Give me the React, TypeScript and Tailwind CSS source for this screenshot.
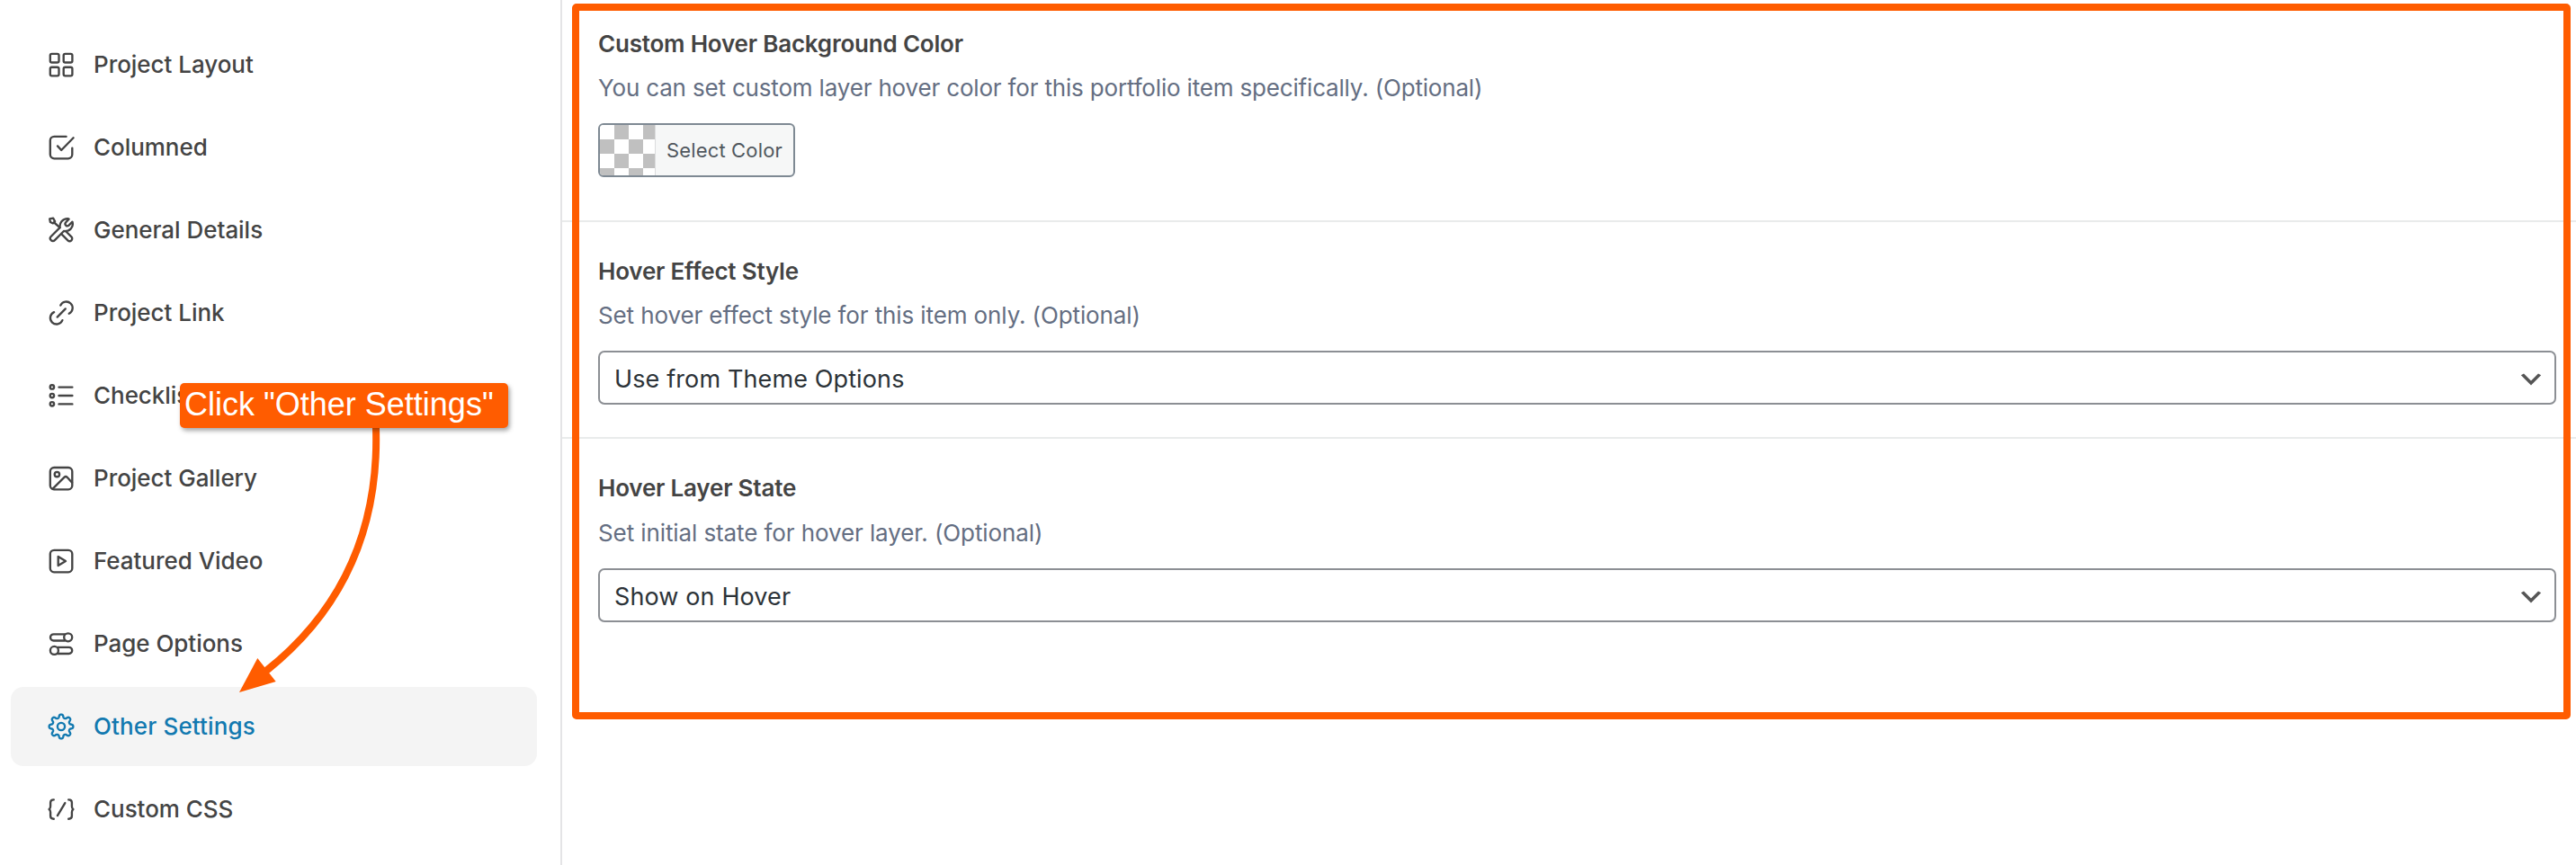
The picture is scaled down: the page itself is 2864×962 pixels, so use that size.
import type { ReactNode } from "react";

const gearPath = (() => {
  const pts: string[] = [];
  for (let i = 0; i < 320; i++) {
    const a = (i / 320) * Math.PI * 2;
    const r = 11.6 + (1.75 * Math.tanh(1.7 * Math.cos(8 * a))) / Math.tanh(1.7);
    pts.push(`${(16 + r * Math.sin(a)).toFixed(2)} ${(16 - r * Math.cos(a)).toFixed(2)}`);
  }
  return `M${pts.join("L")}Z`;
})();

const icons: Record<string, ReactNode> = {
  layout: (
    <>
      <rect x="3.8" y="3.8" width="9.7" height="9.7" rx="1.8" />
      <rect x="18.7" y="3.8" width="9.7" height="9.7" rx="1.8" />
      <rect x="3.8" y="18.7" width="9.7" height="9.7" rx="1.8" />
      <rect x="18.7" y="18.7" width="9.7" height="9.7" rx="1.8" />
    </>
  ),
  check: (
    <>
      <path d="M21.6 3.8H8.3a4.5 4.5 0 0 0-4.5 4.5v15.5a4.5 4.5 0 0 0 4.5 4.5h15.5a4.5 4.5 0 0 0 4.5-4.5v-7.2" />
      <path d="M12 14.4l4.2 4.6L29.6 5.3" />
    </>
  ),
  tools: (
    <>
      <path d="M3.2 3.4l4-.7 1.9 3.7-2.2 1.9L3.9 7z" />
      <path d="M8.2 7.5l6.4 5.6" />
      <path d="M14.6 13.1c-.7-5.6 2.8-9.6 8.7-9.9l1.3.5-3.4 3.6c-1 1.1-.9 2.4 0 3.3s2.2 1 3.3 0l4-3.9c1.6 5.6-2.6 11-9.6 10.3L8.9 27.1a2.9 2.9 0 0 1-4.2-4.1z" />
      <path d="M16.2 20.2l7.2 7.1a2.8 2.8 0 0 0 4-4l-6.4-6.3" />
    </>
  ),
  link: (
    <>
      <path d="M11.7 20.6l9.1-9.2" />
      <path d="M15.3 7.6a7 7 0 1 1 9.4 9.2" />
      <path d="M8.1 15.1a7 7 0 1 0 9.3 9" />
    </>
  ),
  list: (
    <>
      <circle cx="5.9" cy="6.4" r="2.2" />
      <circle cx="5.9" cy="16" r="2.2" />
      <circle cx="5.9" cy="25.3" r="2.2" />
      <path d="M13.5 6.6h14.9M13.5 16h14.9M13.5 25.4h14.9" />
    </>
  ),
  image: (
    <>
      <rect x="3.8" y="4" width="24.5" height="24.3" rx="4.3" />
      <circle cx="11.4" cy="11.5" r="2.7" />
      <path d="M6.6 27.6L19.4 14.8q1.7-1.6 3.3 0l5.4 5.9" />
    </>
  ),
  video: (
    <>
      <rect x="3.8" y="3.8" width="24.5" height="24.5" rx="4.3" />
      <path d="M12.7 10.9v10.2L21 16z" />
    </>
  ),
  toggles: (
    <>
      <path d="M19.9 5.3H7.6a3.6 3.6 0 0 0 0 7.2h12.3" />
      <circle cx="23.7" cy="8.8" r="4.5" />
      <circle cx="8.4" cy="23.4" r="4.5" />
      <path d="M12.2 19.8h12.4a3.6 3.6 0 0 1 0 7.2H12.2" />
    </>
  ),
  gear: (
    <>
      <path d={gearPath} />
      <circle cx="16" cy="16" r="4.1" />
    </>
  ),
  code: (
    <>
      <path d="M7.8 5.3c-2.6 0-3.7.9-3.7 3.2v4.2c0 1.6-.4 2.6-1.5 3.3 1.1.7 1.5 1.7 1.5 3.3v4.2c0 2.3 1.1 3.2 3.7 3.2" />
      <path d="M24.2 5.3c2.6 0 3.7.9 3.7 3.2v4.2c0 1.6.4 2.6 1.5 3.3-1.1.7-1.5 1.7-1.5 3.3v4.2c0 2.3-1.1 3.2-3.7 3.2" />
      <path d="M20.3 9.1l-8.4 14" />
    </>
  ),
};

const nav = [
  { label: "Project Layout", icon: "layout" },
  { label: "Columned", icon: "check" },
  { label: "General Details", icon: "tools" },
  { label: "Project Link", icon: "link" },
  { label: "Checklist", icon: "list" },
  { label: "Project Gallery", icon: "image" },
  { label: "Featured Video", icon: "video" },
  { label: "Page Options", icon: "toggles" },
  { label: "Other Settings", icon: "gear", active: true },
  { label: "Custom CSS", icon: "code" },
];

function NavItem({ label, icon, active }: { label: string; icon: string; active?: boolean }) {
  return (
    <a
      className={
        "flex h-[88px] shrink-0 items-center gap-5 rounded-[14px] pl-10 text-[26px] font-medium leading-9 " +
        (active ? "bg-[#f4f4f4] text-[#1279b0]" : "text-[#444444]")
      }
    >
      <svg viewBox="0 0 32 32" className="size-8 shrink-0" fill="none" stroke="currentColor" strokeWidth="2.35" strokeLinecap="round" strokeLinejoin="round">
        {icons[icon]}
      </svg>
      <span className={active ? "tracking-[0.13px]" : "tracking-[-0.04px]"}>{label}</span>
    </a>
  );
}

function Title({ children }: { children: ReactNode }) {
  return <h3 className="text-[26px] font-semibold leading-9 tracking-[-0.2px] text-[#444444]">{children}</h3>;
}

function Select({ value }: { value: string }) {
  return (
    <div className="mt-[21px] flex h-[60px] w-[2177px] items-center justify-between rounded-[7px] border-2 border-[#8c8f94] bg-white pl-4 pr-2.5">
      <span className="pt-[3px] text-[27px] leading-9 tracking-[0.12px] text-[#2c3338]">{value}</span>
      <svg viewBox="0 0 20 20" className="mt-[3px] size-8" fill="#555555">
        <path d="M5 6l5 5 5-5 2 1-7 7-7-7 2-1z" />
      </svg>
    </div>
  );
}

export default function App() {
  return (
    <div className="relative flex h-[962px] w-[2864px] overflow-hidden bg-white font-['Inter',sans-serif]">
      <nav className="flex w-[625px] shrink-0 flex-col gap-1 border-r-2 border-[#e4e4e6] pl-3 pr-[26px] pt-7">
        {nav.map((item) => (
          <NavItem key={item.label} {...item} />
        ))}
      </nav>

      <main className="flex min-w-0 flex-1 flex-col">
        <section className="border-b-2 border-[#e9ebeb] pb-12 pl-10 pt-[31px]">
          <Title>Custom Hover Background Color</Title>
          <p className="mt-[13px] text-[26px] leading-9 tracking-[-0.174px] text-[#646e82]">
            You can set custom layer hover color for this portfolio item specifically. (Optional)
          </p>
          <button className="mt-[21px] flex h-[60px] w-[219px] overflow-hidden rounded-md border-2 border-[#7e8993] bg-[#f6f7f7]">
            <span className="h-full w-[62px] shrink-0 border-r border-[#dcdcde] bg-[repeating-conic-gradient(#c0c0c0_0_25%,#ffffff_0_50%)] bg-[length:32px_32px] bg-[position:0_0]" />
            <span className="flex-1 pl-3 text-left text-[22px] leading-[56px] tracking-[0.15px] text-[#50575e]">Select Color</span>
          </button>
        </section>

        <section className="border-b-2 border-[#e9ebeb] pb-9 pl-10 pt-[37px]">
          <Title>Hover Effect Style</Title>
          <p className="mt-[13px] text-[26px] leading-9 tracking-[-0.112px] text-[#646e82]">
            Set hover effect style for this item only. (Optional)
          </p>
          <Select value="Use from Theme Options" />
        </section>

        <section className="pl-10 pt-[37px]">
          <Title>Hover Layer State</Title>
          <p className="mt-3.5 text-[26px] leading-9 tracking-[-0.1px] text-[#646e82]">
            Set initial state for hover layer. (Optional)
          </p>
          <Select value="Show on Hover" />
        </section>
      </main>

      <div className="absolute left-[636px] top-1 h-[796px] w-[2222px] rounded-[5px] border-8 border-[#ff5c00]" />

      <svg className="absolute left-[250px] top-[460px]" width="190" height="320" viewBox="250 460 190 320" fill="none">
        <path d="M418 470V476Q423 645 296 746" stroke="#ff5c00" strokeWidth="8" />
        <path d="M266 770L286.3 732L306.7 758Z" fill="#ff5c00" />
      </svg>

      <div className="absolute left-[200px] top-[426px] h-[50px] w-[365px] rounded-[5px] bg-[#ff5c00] pl-[5px] font-['Liberation_Sans',Arial,sans-serif] text-[36px] leading-[48px] text-white shadow-[2px_3px_5px_rgba(0,0,0,0.35)]">
        Click "Other Settings"
      </div>
    </div>
  );
}
